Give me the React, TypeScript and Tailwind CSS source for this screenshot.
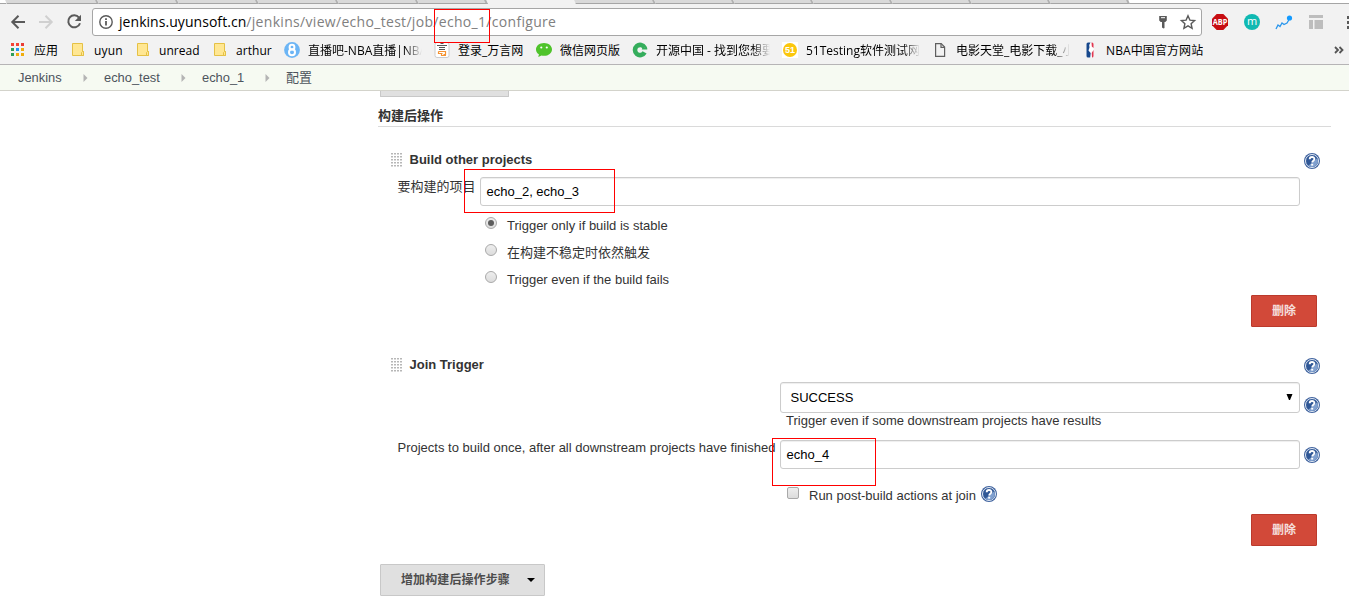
import React from "react";

const UI = "font-['Open_Sans','Noto_Sans_CJK_SC',sans-serif]";
const PAGE = "font-['Liberation_Sans','Noto_Sans_CJK_SC',sans-serif]";

function Folder() {
  return (
    <svg width="16" height="16" viewBox="0 0 16 16">
      <path d="M2.500 1.500h10v8h1v4h-11z" fill="#ffe793" stroke="#e5c145" />
      <path d="M11.500 13.500v-3l1-1h1v4z" fill="#ffe793" stroke="#e5c145" />
    </svg>
  );
}

function Apps() {
  const colors = ["#f44336", "#f44336", "#ea3c35", "#2e9e5b", "#2196f3", "#f0ad0d", "#2e9e5b", "#f0ad0d", "#f0ad0d"];
  return (
    <svg width="16" height="16" viewBox="0 0 16 16">
      {colors.map((c, i) => (
        <rect key={i} x={1 + (i % 3) * 5} y={1 + Math.floor(i / 3) * 5} width="3" height="3" fill={c} />
      ))}
    </svg>
  );
}

function Eight() {
  return (
    <svg width="16" height="16" viewBox="0 0 16 16">
      <circle cx="8" cy="8" r="7.9" fill="#6cb5f5" />
      <circle cx="8" cy="5.200" r="2.400" fill="none" stroke="#fff" strokeWidth="2" />
      <circle cx="8" cy="10.300" r="3" fill="none" stroke="#fff" strokeWidth="2" />
    </svg>
  );
}

function Wanyan() {
  return (
    <svg width="16" height="16" viewBox="0 0 16 16">
      <rect x="1" y=".5" width="14" height="15" rx="2" fill="#fff" stroke="#ccc" />
      <path d="M6.500 1.500h3M3 3.500h10M5 5.500h6M5 7.500h6" stroke="#555" fill="none" />
      <path d="M4.500 9.500h7v3h-2M4.500 9.500v2h4M7.500 11.500v2h4.500" stroke="#f59331" strokeWidth="1.200" fill="none" />
    </svg>
  );
}

function Wechat() {
  return (
    <svg width="16" height="16" viewBox="0 0 16 16">
      <path d="M8 1c4.500 0 8 2.800 8 6.400s-3.500 6.400-8 6.400c-.9 0-1.700-.1-2.500-.3L2.300 15l.6-2.700C1.100 11.100 0 9.400 0 7.400 0 3.800 3.500 1 8 1z" fill="#4fc32b" />
      <circle cx="5.300" cy="5.500" r="1.100" fill="#fff" />
      <circle cx="10.800" cy="5.500" r="1.100" fill="#fff" />
    </svg>
  );
}

function OsChina() {
  return (
    <svg width="16" height="16" viewBox="0 0 16 16">
      <path d="M12.600 5.600A5.100 5.100 0 1 0 12.600 10.400" fill="none" stroke="#35ad5c" strokeWidth="4.600" />
      <path d="M14.600 4.500c.6 1 .8 2 .7 3H9.800c0-.8.300-1.300.9-1.500z" fill="#35ad5c" />
    </svg>
  );
}

function FiftyOne() {
  return (
    <svg width="16" height="16" viewBox="0 0 16 16">
      <path d="M0 0h16v16H0z" fill="#fff" />
      <circle cx="8" cy="8" r="7" fill="#fbc70c" />
      <text x="8" y="11.200" textAnchor="middle" fontSize="9" fontWeight="bold" fill="#fff" fontFamily="Liberation Sans">51</text>
    </svg>
  );
}

function Doc() {
  return (
    <svg width="16" height="16" viewBox="0 0 16 16" fill="none" stroke="#5f5f5f" strokeWidth="1.200">
      <path d="M3.600 1.600h5.600l3.400 3.400v9.400H3.600z" />
      <path d="M9 1.600v3.700h3.600" />
    </svg>
  );
}

function Nba() {
  return (
    <svg width="16" height="16" viewBox="0 0 16 16">
      <rect x="4.500" y=".5" width="7" height="15" rx="1.500" fill="#fff" />
      <path d="M6 .5h2.500L7.200 3l.3 2.500L6.500 8.500 8.700 11l-.5 4.500H6a1.500 1.500 0 0 1-1.500-1.500V2A1.500 1.500 0 0 1 6 .5z" fill="#17488c" />
      <path d="M9.500 .5h.5a1.500 1.500 0 0 1 1.500 1.500v4L9.800 4.500zM11.500 8v6a1.500 1.500 0 0 1-1.500 1.500l-.3-4.500z" fill="#e0364f" />
    </svg>
  );
}

type Mark = { icon: React.ReactNode; text: string; item: string; label: string };

const marks: Mark[] = [
  { icon: <Apps />, text: "应用", item: "w-[60px]", label: "tracking-normal" },
  { icon: <Folder />, text: "uyun", item: "w-[65px]", label: "tracking-[0.2px]" },
  { icon: <Folder />, text: "unread", item: "w-[77px]", label: "tracking-[0.05px]" },
  { icon: <Folder />, text: "arthur", item: "w-[72px]", label: "tracking-[0.05px]" },
  { icon: <Eight />, text: "直播吧-NBA直播|NBA", item: "w-[150px]", label: "w-[114px] mask-r-from-85%" },
  { icon: <Wanyan />, text: "登录_万言网", item: "w-[102px]", label: "tracking-normal" },
  { icon: <Wechat />, text: "微信网页版", item: "w-[96px]", label: "tracking-normal" },
  { icon: <OsChina />, text: "开源中国 - 找到您想要的", item: "w-[150px]", label: "w-[114px] mask-r-from-85%" },
  { icon: <FiftyOne />, text: "51Testing软件测试网", item: "w-[150px]", label: "w-[114px] mask-r-from-85%" },
  { icon: <Doc />, text: "电影天堂_电影下载_小", item: "w-[150px]", label: "w-[114px] mask-r-from-85%" },
  { icon: <Nba />, text: "NBA中国官方网站", item: "w-[140px]", label: "tracking-[0.1px]" },
];

function Tab({ width }: { width: string }) {
  return <div className={`h-1 shrink-0 skew-x-[25deg] border-b border-r-2 border-[#a5a5a5] border-r-[#b0b0b0] bg-[#d9d9d9] ${width}`} />;
}

function TabStrip() {
  return (
    <div className="flex h-1 overflow-hidden bg-[#f2f2f2]">
      <div className="h-1 w-[6px] border-b border-[#a5a5a5] bg-white" />
      <Tab width="w-[92px]" />
      <Tab width="w-[80px]" />
      <Tab width="w-[80px]" />
      <Tab width="w-[80px]" />
      <Tab width="w-[80px]" />
      <Tab width="w-[69px]" />
      <div className="h-1 w-[88px]" />
      <Tab width="w-[80px]" />
      <Tab width="w-[79px]" />
      <Tab width="w-[79px]" />
      <Tab width="w-[79px]" />
      <Tab width="w-[79px]" />
      <Tab width="w-[79px]" />
      <Tab width="w-[79px]" />
      <div className="h-1 flex-1 border-b border-[#a5a5a5] bg-white" />
    </div>
  );
}

function Toolbar() {
  return (
    <div className="flex h-[36px] items-center bg-[#f2f2f2] pl-[10px]">
      <svg width="82" height="20" viewBox="0 0 82 20" fill="none" strokeWidth="2">
        <path d="M15 10H2.500M8.500 3.800L2.300 10l6.200 6.200" stroke="#5a5a5a" />
        <path d="M29 10h12.500M35.500 3.800l6.200 6.200-6.200 6.200" stroke="#d0d0d0" />
        <path d="M69 5.600A6 6 0 1 0 70 11.200" stroke="#5a5a5a" />
        <path d="M71 2.800v6.200h-6.200z" fill="#5a5a5a" />
      </svg>
      <div className="flex h-7 w-[1110px] items-center rounded-[3px] border border-[#a6a6a6] bg-white pl-[6px]">
        <svg width="14" height="14" viewBox="0 0 14 14" fill="none" stroke="#5a5a5a" strokeWidth="1.400">
          <circle cx="7" cy="7" r="6.200" />
          <path d="M7 6v4.500M7 3.300v1.600" strokeWidth="1.800" />
        </svg>
        <div className={`ml-[6px] flex-1 whitespace-nowrap text-[14px] leading-[26px] tracking-[0.310px] text-[#808080] ${UI}`}>
          <span className="tracking-[0.05px] text-black">jenkins.uyunsoft.cn</span>/jenkins/view/echo_test/job/echo_1/configure
        </div>
        <svg className="mr-[3px]" width="42" height="18" viewBox="0 0 42 18" fill="none" stroke="#5a5a5a">
          <path d="M3.200 3h7.600v4.500l-1.500 1.500H8.500v6l-1 .6-1.500-1V9H4.700L3.200 7.500z" fill="#5a5a5a" stroke="none" />
          <path d="M5 4.700h4" stroke="#fff" />
          <path d="M32 2.800l1.900 4.300 4.700.5-3.500 3.100 1 4.600L32 12.900l-4.100 2.400 1-4.600-3.500-3.100 4.700-.5z" strokeWidth="1.400" />
        </svg>
      </div>
      <svg className="ml-[10px]" width="137" height="20" viewBox="0 0 137 20">
        <path d="M4.700 2h6.600L16 6.700v6.600L11.300 18H4.700L0 13.300V6.700z" fill="#c70d12" />
        <text x="8" y="13" textAnchor="middle" fontSize="8" textLength="14.500" lengthAdjust="spacingAndGlyphs" fontWeight="bold" fill="#fff" fontFamily="Open Sans">ABP</text>
        <circle cx="40" cy="10" r="8" fill="#10b9b2" />
        <text x="40" y="13" textAnchor="middle" fontSize="11" fill="#fff" fontFamily="Open Sans">m</text>
        <path d="M64 17l2-4 2 1.500 2-3.500 2 1.500 3-1.500L78 6" fill="none" stroke="#2a96ec" strokeWidth="1.300" />
        <circle cx="77.500" cy="6" r="2.600" fill="#149bff" />
        <path d="M97 3h14v3H97zM97 8h4v9h-4zM102.500 8h8.500v9h-8.500z" fill="#bdbdbd" />
        <path d="M135 4h3v3h-3zM135 9h3v3h-3zM135 14h3v3h-3z" fill="#5a5a5a" />
      </svg>
    </div>
  );
}

function Bookmarks() {
  return (
    <div className={`flex h-[25px] border-b border-[#b6b4b6] bg-[#f2f2f2] pb-[4px] pl-[10px] text-[12px] text-black ${UI}`}>
      {marks.map((m) => (
        <div key={m.text} className={`flex shrink-0 items-center ${m.item}`}>
          <span className="shrink-0">{m.icon}</span>
          <span className={`ml-2 mt-px block overflow-hidden whitespace-nowrap leading-5 ${m.label}`}>{m.text}</span>
        </div>
      ))}
      <svg className="ml-auto mr-[5px] mt-[6px]" width="10" height="8" viewBox="0 0 10 8" fill="none" stroke="#555" strokeWidth="1.800">
        <path d="M1 1l3 3-3 3M5.500 1l3 3-3 3" />
      </svg>
    </div>
  );
}

function Crumb() {
  return (
    <svg width="5" height="8" viewBox="0 0 5 8">
      <path d="M.5 0l4 4-4 4z" fill="#b4b4b4" />
    </svg>
  );
}

function Breadcrumbs() {
  return (
    <div className="flex h-[26px] items-center border-b border-[#d3d3cb] bg-[#f6faf2] pl-[18px] pt-px text-[12.900px] text-[#4d545d]">
      <span className="w-[65px]">Jenkins</span>
      <Crumb />
      <span className="ml-4 w-[77px]">echo_test</span>
      <Crumb />
      <span className="ml-4 w-[63px]">echo_1</span>
      <Crumb />
      <span className="ml-4 text-[13px]">配置</span>
    </div>
  );
}

function Help() {
  return (
    <svg className="shrink-0" width="16" height="16" viewBox="0 0 16 16">
      <circle cx="8" cy="8" r="8" fill="#41649f" />
      <circle cx="8" cy="8" r="6.500" fill="#2f5796" stroke="#e4ebf5" />
      <path d="M14 8a6 6 0 0 1-6 6c-1.400 0-2.600-.5-3.700-1.300L13.200 5.200z" fill="#7f9fce" />
      <path d="M5.700 6.300c0-3 4.700-3 4.700-.2 0 1.700-2.200 1.700-2.200 3.500" fill="none" stroke="#fff" strokeWidth="1.900" />
      <path d="M7.200 10.800h2v1.800h-2z" fill="#fff" />
    </svg>
  );
}

function Title({ text }: { text: string }) {
  return (
    <div className="flex h-[22px] items-center pl-[13px]">
      <svg width="12" height="14" viewBox="0 0 12 14">
        {Array.from({ length: 20 }, (_, i) => (
          <rect key={i} x={(i % 4) * 3} y={Math.floor(i / 4) * 3} width="2" height="1.500" fill="#b7b7b7" />
        ))}
      </svg>
      <span className="ml-[6.500px] text-[13px] font-bold leading-5">{text}</span>
      <span className="ml-auto mr-[11px] mt-[2px]"><Help /></span>
    </div>
  );
}

function Radio({ on, text }: { on?: boolean; text: string }) {
  return (
    <div className="flex h-[27px] pl-[107px]">
      <span className="mt-[5px] flex size-3 items-center justify-center rounded-full border border-[#a9a9a9] bg-linear-to-b from-[#eeeeee] to-[#dcdcdc]">
        {on && <span className="size-[6px] rounded-full bg-[#5c5c5c]" />}
      </span>
      <span className="ml-[10px] mt-[4px] leading-5">{text}</span>
    </div>
  );
}

function Delete() {
  return (
    <button className="ml-[873px] flex h-8 w-[66px] items-center justify-center rounded-[1px] border border-[#bb3a2c] bg-[#d24939] text-[12px] font-bold text-[#f5dfdc]">
      删除
    </button>
  );
}

const FIELD = "flex items-center rounded-[3px] border border-[#cccccc] bg-white text-black shadow-[inset_0_1px_1px_rgba(0,0,0,0.07)]";

export default function App() {
  return (
    <div className={`relative h-[605px] w-[1349px] overflow-hidden bg-white text-[13px] text-[#333333] ${PAGE}`}>
      <TabStrip />
      <Toolbar />
      <Bookmarks />
      <Breadcrumbs />
      <main className="w-[1331px] pl-[378px]">
        <div className="ml-[2px] h-[6px] w-[129px] rounded-b-[1px] border border-t-0 border-[#c8c8c8] bg-[#e0e0e0]" />
        <h2 className="h-[30px] border-b border-[#dadada] pt-[9px] text-[13px] font-bold leading-5">构建后操作</h2>

        <section className="pt-[22px]">
          <Title text="Build other projects" />
          <div className="mt-[6px] flex h-[29px] pl-[19.500px]">
            <span className="w-[82.500px] leading-5">要构建的项目</span>
            <div className={`h-[29px] w-[820px] pl-[5.500px] ${FIELD}`}>echo_2, echo_3</div>
          </div>
          <div className="mt-[6px]">
            <Radio on text="Trigger only if build is stable" />
            <Radio text="在构建不稳定时依然触发" />
            <Radio text="Trigger even if the build fails" />
          </div>
          <div className="mt-[2px]"><Delete /></div>
        </section>

        <section className="pt-[27px]">
          <Title text="Join Trigger" />
          <div className="mt-[6px] flex h-[31px] pl-[402px]">
            <div className={`h-[31px] w-[520px] justify-between pl-[9.500px] pr-[6px] ${FIELD}`}>
              <span>SUCCESS</span>
              <svg width="7" height="7" viewBox="0 0 7 7"><path d="M.5 0h6l-2.500 6h-1z" fill="#000" /></svg>
            </div>
            <span className="ml-1 mt-[15px]"><Help /></span>
          </div>
          <div className="h-[27px] pl-[408px] leading-[16px]">Trigger even if some downstream projects have results</div>
          <div className="flex h-[29px] pl-[19.500px]">
            <span className="-mt-[2px] w-[382.500px] whitespace-nowrap leading-5">Projects to build once, after all downstream projects have finished</span>
            <div className={`h-[29px] w-[520px] pl-[5.500px] ${FIELD}`}>echo_4</div>
            <span className="ml-1 mt-[7px]"><Help /></span>
          </div>
          <div className="mt-[16px] flex h-[29px] pl-[409px]">
            <span className="mt-[2px] size-3 rounded-[2px] border border-[#a9a9a9] bg-linear-to-b from-[#eeeeee] to-[#dcdcdc]" />
            <span className="ml-[10px] mt-px leading-5">Run post-build actions at join</span>
            <span className="ml-[5px] mt-[1px]"><Help /></span>
          </div>
          <Delete />
        </section>

        <button className="ml-[2px] mt-[18px] flex h-8 w-[165px] items-center rounded-[1px] border border-[#c8c8c8] bg-[#e0e0e0] pl-5 text-[12px] font-bold tracking-[0.100px] text-[#4d4d4d]">
          增加构建后操作步骤
          <svg className="ml-auto mr-[9px]" width="8" height="4" viewBox="0 0 8 4"><path d="M0 0h8L4 4z" fill="#000" /></svg>
        </button>
      </main>

      <div className="absolute left-[434px] top-[9px] h-[34px] w-[56px] border border-[#ff0000]" />
      <div className="absolute left-[464px] top-[169px] h-[44px] w-[151px] border border-[#ff0000]" />
      <div className="absolute left-[772px] top-[438px] h-[48px] w-[104px] border border-[#ff0000]" />
    </div>
  );
}
